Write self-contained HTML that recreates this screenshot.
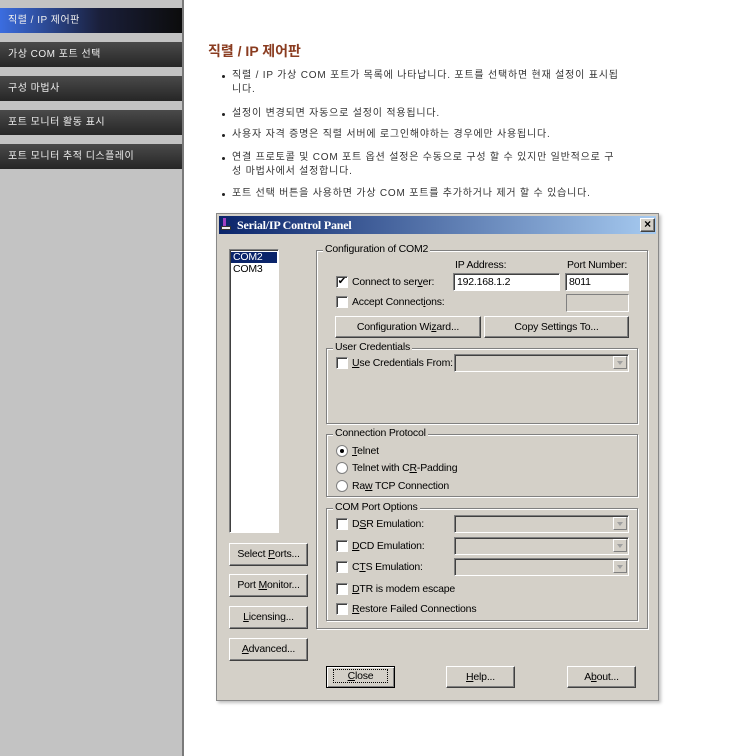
<!DOCTYPE html>
<html><head><meta charset="utf-8"><style>
*{margin:0;padding:0;box-sizing:border-box}
body{width:743px;height:756px;background:#fff;position:relative;overflow:hidden;font-family:"Liberation Sans","Noto Sans CJK KR",sans-serif}
.a{position:absolute}
#side{left:0;top:0;width:184px;height:756px;background:#c3c3c3;border-right:2px solid #7a7a7a}
.nav{position:absolute;left:0;width:182px;height:25px;color:#eee;font-size:10px;line-height:25px;padding-left:8px;background:linear-gradient(#4a4a4a,#262626);letter-spacing:.5px}
h1{position:absolute;left:208px;top:41px;font-size:14px;color:#8a3c20;font-weight:bold}
.b{position:absolute;left:219px;font-size:10px;color:#333;line-height:14px;width:410px;padding-left:13px;letter-spacing:.8px;word-break:break-all}
.b:before{content:"";position:absolute;left:3px;top:6px;width:3px;height:3px;background:#222;border-radius:50%}
#dlg{left:216px;top:213px;width:443px;height:488px;background:#d4d0c8;border:1px solid #888;box-shadow:2px 2px 3px rgba(0,0,0,.25)}
.t{font-family:"Liberation Sans",sans-serif;font-size:10.5px;color:#000;position:absolute;white-space:nowrap;letter-spacing:-.2px}
.sunk{position:absolute;background:#fff;border:1px solid;border-color:#808080 #fff #fff #808080;box-shadow:inset 1px 1px 0 #404040}
.dis{background:#d4d0c8}
.btn{position:absolute;background:#d4d0c8;border:1px solid;border-color:#fff #404040 #404040 #fff;box-shadow:inset -1px -1px 0 #808080;font-size:10.5px;text-align:center;font-family:"Liberation Sans",sans-serif;letter-spacing:-.2px}
.grp{position:absolute;border:1px solid #808080;box-shadow:1px 1px 0 #fff,inset 1px 1px 0 #fff}
.gl{position:absolute;top:-8px;left:6px;background:#d4d0c8;padding:0 2px;font-size:10.5px;font-family:"Liberation Sans",sans-serif;letter-spacing:-.2px}
.cb{position:absolute;width:12px;height:12px;background:#fff;border:1px solid;border-color:#808080 #fff #fff #808080;box-shadow:inset 1px 1px 0 #404040;font-size:10px;line-height:10px;text-align:center}
.rb{position:absolute;width:12px;height:12px;background:#fff;border-radius:50%;border:1px solid #808080}
.arr{position:absolute;right:1px;top:1px;width:14px;height:13px;background:#d4d0c8;border:1px solid;border-color:#fff #808080 #808080 #fff}
.arr:after{content:"";position:absolute;left:3px;top:4px;border:3px solid transparent;border-top:4px solid #a0a0a0}
u{text-decoration:underline}
</style></head><body>
<div id="side" class="a"></div>
<div class="nav" style="top:8px;background:linear-gradient(90deg,#3b6de0,#1a1f3a 55%,#0c0c0c)">직렬 / IP 제어판</div>
<div class="nav" style="top:42px">가상 COM 포트 선택</div>
<div class="nav" style="top:76px">구성 마법사</div>
<div class="nav" style="top:110px">포트 모니터 활동 표시</div>
<div class="nav" style="top:144px">포트 모니터 추적 디스플레이</div>

<h1>직렬 / IP 제어판</h1>
<div class="b" style="top:69px;width:408px">직렬 / IP 가상 COM 포트가 목록에 나타납니다. 포트를 선택하면 현재 설정이 표시됩니다.</div>
<div class="b" style="top:107px">설정이 변경되면 자동으로 설정이 적용됩니다.</div>
<div class="b" style="top:128px">사용자 자격 증명은 직렬 서버에 로그인해야하는 경우에만 사용됩니다.</div>
<div class="b" style="top:151px;width:402px">연결 프로토콜 및 COM 포트 옵션 설정은 수동으로 구성 할 수 있지만 일반적으로 구성 마법사에서 설정합니다.</div>
<div class="b" style="top:187px">포트 선택 버튼을 사용하면 가상 COM 포트를 추가하거나 제거 할 수 있습니다.</div>

<div id="dlg" class="a">
<div class="a" style="left:2px;top:2px;width:437px;height:18px;background:linear-gradient(90deg,#0a246a,#a6caf0)"></div>
<div class="a" style="left:6px;top:4px;width:3px;height:9px;background:#a040c0"></div>
<div class="a" style="left:4px;top:12px;width:10px;height:4px;background:#eee;border:1px solid #333"></div>
<div class="t" style="left:20px;top:4px;color:#fff;font-weight:bold;font-family:'Liberation Serif',serif;font-size:12px">Serial/IP Control Panel</div>
<div class="btn" style="left:423px;top:4px;width:15px;height:14px;font-size:12px;line-height:11px;font-weight:bold">×</div>
</div>

<div class="sunk" style="left:229px;top:249px;width:50px;height:284px"></div>
<div class="a" style="left:231px;top:252px;width:46px;height:11px;background:#0a246a"></div>
<div class="t" style="left:233px;top:251px;color:#fff;line-height:12px">COM2</div>
<div class="t" style="left:233px;top:263px;line-height:12px">COM3</div>

<div class="btn" style="left:229px;top:543px;width:79px;height:23px;line-height:21px">Select <u>P</u>orts...</div>
<div class="btn" style="left:229px;top:574px;width:79px;height:23px;line-height:21px">Port <u>M</u>onitor...</div>
<div class="btn" style="left:229px;top:606px;width:79px;height:23px;line-height:21px"><u>L</u>icensing...</div>
<div class="btn" style="left:229px;top:638px;width:79px;height:23px;line-height:21px"><u>A</u>dvanced...</div>

<div class="grp" style="left:316px;top:250px;width:332px;height:379px"><span class="gl">Configuration of COM2</span></div>
<div class="t" style="left:455px;top:259px">IP Address:</div>
<div class="t" style="left:567px;top:259px">Port Number:</div>
<div class="sunk" style="left:453px;top:273px;width:107px;height:18px"></div>
<div class="t" style="left:457px;top:276px">192.168.1.2</div>
<div class="sunk" style="left:565px;top:273px;width:64px;height:18px"></div>
<div class="t" style="left:569px;top:276px">8011</div>
<div class="cb" style="left:336px;top:276px">✔</div>
<div class="t" style="left:352px;top:276px">Connect to ser<u>v</u>er:</div>
<div class="cb" style="left:336px;top:296px"></div>
<div class="t" style="left:352px;top:296px">Accept Connect<u>i</u>ons:</div>
<div class="sunk dis" style="left:566px;top:294px;width:63px;height:18px;box-shadow:none"></div>
<div class="btn" style="left:335px;top:316px;width:146px;height:22px;line-height:20px">Configuration Wi<u>z</u>ard...</div>
<div class="btn" style="left:484px;top:316px;width:145px;height:22px;line-height:20px">Copy Settings To...</div>

<div class="grp" style="left:326px;top:348px;width:312px;height:76px"><span class="gl">User Credentials</span></div>
<div class="cb" style="left:336px;top:357px"></div>
<div class="t" style="left:352px;top:357px"><u>U</u>se Credentials From:</div>
<div class="sunk dis" style="left:454px;top:354px;width:175px;height:18px"><div class="arr"></div></div>

<div class="grp" style="left:326px;top:434px;width:312px;height:63px"><span class="gl">Connection Protocol</span></div>
<div class="rb" style="left:336px;top:445px"><div class="a" style="left:3px;top:3px;width:4px;height:4px;background:#000;border-radius:50%"></div></div>
<div class="t" style="left:352px;top:445px"><u>T</u>elnet</div>
<div class="rb" style="left:336px;top:462px"></div>
<div class="t" style="left:352px;top:462px">Telnet with C<u>R</u>-Padding</div>
<div class="rb" style="left:336px;top:480px"></div>
<div class="t" style="left:352px;top:480px">Ra<u>w</u> TCP Connection</div>

<div class="grp" style="left:326px;top:508px;width:312px;height:113px"><span class="gl">COM Port Options</span></div>
<div class="cb" style="left:336px;top:518px"></div><div class="t" style="left:352px;top:518px">D<u>S</u>R Emulation:</div>
<div class="sunk dis" style="left:454px;top:515px;width:175px;height:18px"><div class="arr"></div></div>
<div class="cb" style="left:336px;top:540px"></div><div class="t" style="left:352px;top:540px"><u>D</u>CD Emulation:</div>
<div class="sunk dis" style="left:454px;top:537px;width:175px;height:18px"><div class="arr"></div></div>
<div class="cb" style="left:336px;top:561px"></div><div class="t" style="left:352px;top:561px">C<u>T</u>S Emulation:</div>
<div class="sunk dis" style="left:454px;top:558px;width:175px;height:18px"><div class="arr"></div></div>
<div class="cb" style="left:336px;top:583px"></div><div class="t" style="left:352px;top:583px"><u>D</u>TR is modem escape</div>
<div class="cb" style="left:336px;top:603px"></div><div class="t" style="left:352px;top:603px"><u>R</u>estore Failed Connections</div>

<div class="btn" style="left:326px;top:666px;width:69px;height:22px;line-height:18px;border:1px solid #000;box-shadow:inset 1px 1px 0 #fff,inset -1px -1px 0 #808080"><span style="outline:1px dotted #000;padding:0 14px"><u>C</u>lose</span></div>
<div class="btn" style="left:446px;top:666px;width:69px;height:22px;line-height:20px"><u>H</u>elp...</div>
<div class="btn" style="left:567px;top:666px;width:69px;height:22px;line-height:20px">A<u>b</u>out...</div>
</body></html>
